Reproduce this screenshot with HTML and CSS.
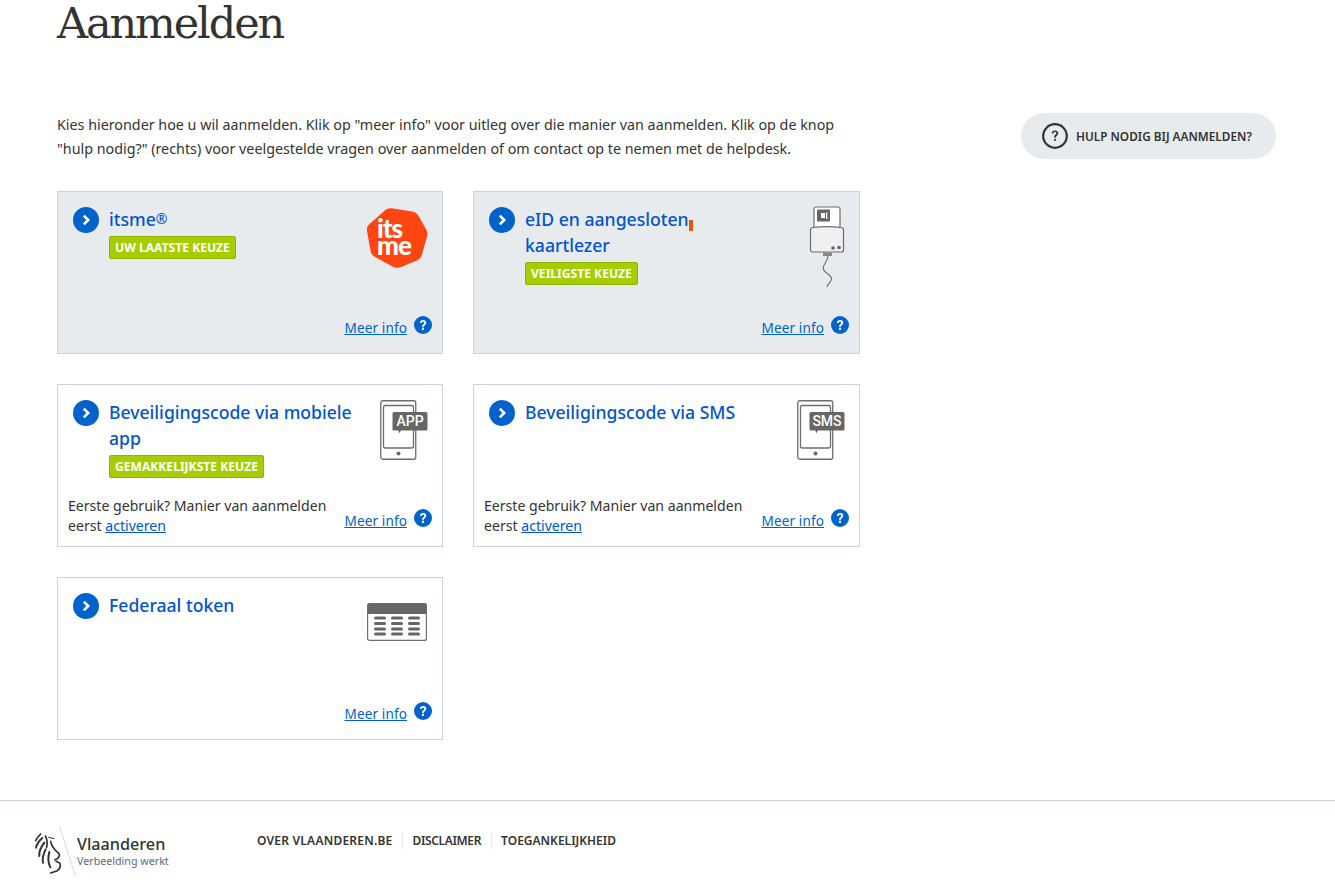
FILE: index.html
```html
<!DOCTYPE html>
<html lang="nl">
<head>
<meta charset="utf-8">
<title>Aanmelden</title>
<link rel="stylesheet" href="styles.css">
</head>
<body>
<svg class="defs" width="0" height="0" aria-hidden="true">
  <symbol id="go" viewBox="0 0 26 26"><circle cx="13" cy="13" r="13" fill="#0063cb"/><path d="M10.8 8.6 15.2 13l-4.400 4.400" fill="none" stroke="#fff" stroke-width="2.600"/></symbol>
  <symbol id="qm" viewBox="0 0 18 18"><circle cx="9" cy="9" r="9" fill="#0063cb"/><path d="M5.900 6.900C5.900 5.100 7.200 4 9.100 4c1.900 0 3.200 1.100 3.200 2.700 0 2.200-2.400 2.200-2.400 4H8c0-2.700 2.300-2.700 2.300-4 0-.6-.5-1-1.200-1-.8 0-1.300.5-1.300 1.200z" fill="#fff"/><rect x="8" y="11.700" width="2" height="2.200" fill="#fff"/></symbol>
</svg>
<main class="page">
  <h1 class="title">Aanmelden</h1>
  <div class="intro">
    <p class="intro-text">Kies hieronder hoe u wil aanmelden. Klik op "meer info" voor uitleg over die manier van aanmelden. Klik op de knop "hulp nodig?" (rechts) voor veelgestelde vragen over aanmelden of om contact op te nemen met de helpdesk.</p>
    <a class="help" href="#">
      <svg class="help-icon" viewBox="0 0 26 26" width="26" height="26"><circle cx="13" cy="13" r="11.800" fill="none" stroke="#333332" stroke-width="2.200"/><path d="M9.700 10.400c0-1.900 1.400-3 3.300-3 1.900 0 3.300 1.100 3.300 2.800 0 2.200-2.400 2.200-2.400 4.200h-1.800c0-2.800 2.300-2.700 2.300-4.100 0-.7-.6-1.200-1.400-1.200-1 0-1.500.6-1.500 1.400z" fill="#333332"/><rect x="12.100" y="15.800" width="1.800" height="2" fill="#333332"/></svg>
      <span>HULP NODIG BIJ AANMELDEN?</span>
    </a>
  </div>
  <div class="cards">
    <article class="card card-grey">
      <div class="card-head">
        <svg class="go" width="26" height="26"><use href="#go"/></svg>
        <div class="card-main">
          <a class="card-title" href="#">itsme<span class="reg">®</span></a>
          <span class="tag">Uw laatste keuze</span>
        </div>
        <svg class="logo logo-itsme" width="62" height="62" viewBox="0 0 62 62">
          <path d="M20 2.500C22 1.400 24 1 26 1.300L46 4.600C49 5.100 51.300 6.700 52.800 9.200L60.200 22.500C61.500 24.800 61.800 27 61 29.400L56 47.500C55.200 50.400 53.500 52.300 50.800 53.400L35 60C32.200 61.200 29.600 61 27 59.800L9 50C6.500 48.600 5 46.500 4.500 43.800L1 24C.6 21.400 1.300 19.200 3.200 17.300Z" fill="#ff4612"/>
          <text x="11" y="31" class="logo-text">its</text>
          <text x="11" y="48" class="logo-text">me</text>
        </svg>
      </div>
      <div class="card-foot">
        <span class="note"></span>
        <a class="more" href="#">Meer info</a>
        <svg class="qm" width="18" height="18"><use href="#qm"/></svg>
      </div>
    </article>

    <article class="card card-grey">
      <div class="card-head">
        <svg class="go" width="26" height="26"><use href="#go"/></svg>
        <div class="card-main">
          <a class="card-title" href="#">eID en aangesloten<span class="caret"></span> kaartlezer</a>
          <span class="tag">Veiligste keuze</span>
        </div>
        <svg class="logo logo-reader" width="37" height="82" viewBox="0 0 37 82">
          <rect x="6" y="1" width="26" height="21" rx="2" fill="#fff" stroke="#6d6d6d" stroke-width="1.200"/>
          <rect x="9" y="3.500" width="13" height="12" rx="1" fill="#666"/>
          <rect x="13" y="7" width="4" height="5" fill="#fff"/>
          <rect x="18" y="6.500" width="1.300" height="6.500" fill="#fff"/>
          <path d="M5 21.500c9-1 19-1 28 0a2.500 2.500 0 0 1 2.500 2.500v20a2 2 0 0 1-2 2h-29a2 2 0 0 1-2-2V24A2.500 2.500 0 0 1 5 21.500z" fill="#eef0f2" stroke="#6d6d6d" stroke-width="1.200"/>
          <circle cx="25" cy="42" r="1.800" fill="#666"/><circle cx="31" cy="41.500" r="1.800" fill="#666"/>
          <rect x="15" y="46.500" width="9" height="3.500" fill="#888"/>
          <path d="M20 50c0 5-4.800 8-4.800 12 0 5 8.300 6 8.300 11 0 3-3.500 4-4.500 8" fill="none" stroke="#6d6d6d" stroke-width="1.100"/>
        </svg>
      </div>
      <div class="card-foot">
        <span class="note"></span>
        <a class="more" href="#">Meer info</a>
        <svg class="qm" width="18" height="18"><use href="#qm"/></svg>
      </div>
    </article>

    <article class="card">
      <div class="card-head">
        <svg class="go" width="26" height="26"><use href="#go"/></svg>
        <div class="card-main">
          <a class="card-title" href="#">Beveiligingscode via mobiele app</a>
          <span class="tag">Gemakkelijkste keuze</span>
        </div>
        <svg class="logo logo-phone" width="48" height="62" viewBox="0 0 48 62">
          <rect x=".75" y=".75" width="35" height="58.500" rx="2" fill="none" stroke="#6d6d6d" stroke-width="1.300"/>
          <rect x="3.500" y="5.500" width="30" height="42.500" rx="2" fill="none" stroke="#6d6d6d" stroke-width="1.300"/>
          <circle cx="18.500" cy="53.500" r="2" fill="#666"/>
          <path d="M14 12h32a1.500 1.500 0 0 1 1.500 1.500v15.500a1.500 1.500 0 0 1-1.500 1.500H21l-2 3-.5-3H14a1.500 1.500 0 0 1-1.500-1.500v-15.500A1.500 1.500 0 0 1 14 12z" fill="#666"/>
          <text x="30" y="26" class="bubble-text" text-anchor="middle">APP</text>
        </svg>
      </div>
      <div class="card-foot">
        <span class="note">Eerste gebruik? Manier van aanmelden eerst <a href="#" class="note-link">activeren</a></span>
        <a class="more" href="#">Meer info</a>
        <svg class="qm" width="18" height="18"><use href="#qm"/></svg>
      </div>
    </article>

    <article class="card">
      <div class="card-head">
        <svg class="go" width="26" height="26"><use href="#go"/></svg>
        <div class="card-main">
          <a class="card-title" href="#">Beveiligingscode via SMS</a>
        </div>
        <svg class="logo logo-phone" width="48" height="62" viewBox="0 0 48 62">
          <rect x=".75" y=".75" width="35" height="58.500" rx="2" fill="none" stroke="#6d6d6d" stroke-width="1.300"/>
          <rect x="3.500" y="5.500" width="30" height="42.500" rx="2" fill="none" stroke="#6d6d6d" stroke-width="1.300"/>
          <circle cx="18.500" cy="53.500" r="2" fill="#666"/>
          <path d="M14 12h32a1.500 1.500 0 0 1 1.500 1.500v15.500a1.500 1.500 0 0 1-1.500 1.500H21l-2 3-.5-3H14a1.500 1.500 0 0 1-1.500-1.500v-15.500A1.500 1.500 0 0 1 14 12z" fill="#666"/>
          <text x="30" y="26" class="bubble-text" text-anchor="middle">SMS</text>
        </svg>
      </div>
      <div class="card-foot">
        <span class="note">Eerste gebruik? Manier van aanmelden eerst <a href="#" class="note-link">activeren</a></span>
        <a class="more" href="#">Meer info</a>
        <svg class="qm" width="18" height="18"><use href="#qm"/></svg>
      </div>
    </article>

    <article class="card">
      <div class="card-head">
        <svg class="go" width="26" height="26"><use href="#go"/></svg>
        <div class="card-main">
          <a class="card-title" href="#">Federaal token</a>
        </div>
        <svg class="logo logo-token" width="60" height="38" viewBox="0 0 60 38">
          <path d="M2 .5h56A1.500 1.500 0 0 1 59.500 2v9H.5V2A1.500 1.500 0 0 1 2 .5z" fill="#666"/>
          <rect x=".6" y=".6" width="58.800" height="36.800" rx="2" fill="none" stroke="#6d6d6d" stroke-width="1.200"/>
          <g fill="#666">
            <rect x="7" y="13.500" width="12" height="3" rx="1.500"/><rect x="24" y="13.500" width="12" height="3" rx="1.500"/><rect x="41" y="13.500" width="12" height="3" rx="1.500"/>
            <rect x="7" y="19" width="12" height="3" rx="1.500"/><rect x="24" y="19" width="12" height="3" rx="1.500"/><rect x="41" y="19" width="12" height="3" rx="1.500"/>
            <rect x="7" y="24.500" width="12" height="3" rx="1.500"/><rect x="24" y="24.500" width="12" height="3" rx="1.500"/><rect x="41" y="24.500" width="12" height="3" rx="1.500"/>
            <rect x="7" y="29.500" width="12" height="3" rx="1.500"/><rect x="24" y="29.500" width="12" height="3" rx="1.500"/><rect x="41" y="29.500" width="12" height="3" rx="1.500"/>
          </g>
        </svg>
      </div>
      <div class="card-foot">
        <span class="note"></span>
        <a class="more" href="#">Meer info</a>
        <svg class="qm" width="18" height="18"><use href="#qm"/></svg>
      </div>
    </article>
  </div>
</main>
<footer class="footer">
  <a class="brand" href="#">
    <svg class="lion" width="50" height="54" viewBox="0 0 150 162">
      <g fill="none" stroke="#333332" stroke-linecap="round">
        <path d="M26 30C20 36 14 42 11 50" stroke-width="5"/>
        <path d="M31 42C22 50 14 60 12 71" stroke-width="6"/>
        <path d="M37 56C28 68 20 82 22 96" stroke-width="6"/>
        <path d="M41 76C34 90 30 102 33 116" stroke-width="6"/>
        <path d="M40 36C46 46 46 60 44 70" stroke-width="5"/>
        <path d="M52 84C48 98 48 116 55 130" stroke-width="6"/>
        <path d="M56 52C58 66 66 76 80 88C84 92 84 96 76 104L68 107" stroke-width="5"/>
        <path d="M72 112L84 118C86 126 84 134 76 140L56 147" stroke-width="5"/>
        <path d="M50 40L66 44" stroke-width="3"/>
      </g>
      <path d="M82 5 130 156" fill="none" stroke="#cbd2da" stroke-width="2.500"/>
    </svg>
    <span class="brand-text">
      <span class="brand-name">Vlaanderen</span>
      <span class="brand-sub">Verbeelding werkt</span>
    </span>
  </a>
  <nav class="foot-nav">
    <a href="#">OVER VLAANDEREN.BE</a>
    <a href="#">DISCLAIMER</a>
    <a href="#">TOEGANKELIJKHEID</a>
  </nav>
</footer>
</body>
</html>
```
FILE: styles.css
```css
* { box-sizing: border-box; }
html, body { margin: 0; padding: 0; }
body {
  font-family: "Noto Sans", "Open Sans", sans-serif;
  color: #333332;
  background: #fff;
  font-size: 15px;
  height: 882px;
  overflow: hidden;
}
.defs { position: absolute; }
a { color: inherit; }

.page { padding: 0 59px 0 57px; height: 800px; }

.title {
  margin: 0;
  height: 113px;
  font-family: "DejaVu Serif", serif;
  font-weight: 400;
  font-size: 43px;
  line-height: 46px;
  letter-spacing: -2.100px;
  color: #333332;
}

.intro { display: flex; justify-content: space-between; align-items: flex-start; height: 78px; }
.intro-text { margin: 0; width: 800px; font-size: 14.300px; line-height: 24px; }

.help {
  display: flex;
  align-items: center;
  gap: 8px;
  width: 255px;
  height: 46px;
  padding-left: 21px;
  background: #e8ebee;
  border-radius: 23px;
  text-decoration: none;
  font-size: 11.800px;
  font-weight: 600;
  color: #333332;
}
.help-icon { flex: none; }

.cards {
  display: grid;
  grid-template-columns: 386px 387px;
  grid-auto-rows: 163px;
  column-gap: 30px;
  row-gap: 30px;
}

.card {
  display: flex;
  flex-direction: column;
  border: 1px solid #cbd2da;
  background: #fff;
  padding: 15px 10px 9px 15px;
}
.card-grey { background: #e8ebee; }

.card-head { display: flex; align-items: flex-start; flex: 1; min-height: 0; }
.go { flex: none; margin-right: 10px; }
.card-main { flex: 1; min-width: 0; max-width: 250px; margin-right: auto; margin-top: -1px; display: flex; flex-direction: column; align-items: flex-start; }
.card-title {
  font-size: 17.600px;
  line-height: 26px;
  font-weight: 500;
  color: #0055cc;
  text-decoration: none;
  position: relative;
}
.reg { font-weight: 400; font-size: 14px; vertical-align: 2px; }
.caret {
  position: absolute;
  width: 4px;
  height: 11px;
  margin-top: 14px;
  background: #e8590c;
}
.tag {
  margin-top: 4px;
  height: 23px;
  padding: 0 5px;
  display: inline-flex;
  align-items: center;
  background: #a5cd00;
  border: 1px solid #8fb300;
  border-radius: 2px;
  color: #fff;
  font-size: 12.100px;
  font-weight: 700;
  text-transform: uppercase;
  white-space: nowrap;
}

.logo { flex: none; }
.logo-itsme { margin: 0 4px 0 0; }
.logo-reader { margin: -1px 4px 0 0; }
.logo-phone { margin: 0 4px 0 0; }
.logo-token { margin: 10px 5px 0 0; }
.logo-text { font-family: "Lato", sans-serif; font-weight: 900; font-size: 26px; fill: #fff; letter-spacing: -1px; }
.bubble-text { font-family: "Roboto", sans-serif; font-weight: 500; font-size: 14px; fill: #fff; }

.card-foot { display: flex; align-items: flex-end; margin-left: -5px; }
.note { flex: 1; font-size: 14.100px; line-height: 20px; max-width: 277px; margin: 0 auto 1px 0; color: #333332; }
.note-link { color: #0055cc; }
.more { font-size: 13.600px; line-height: 20px; color: #0063cb; margin-bottom: 6px; margin-right: 7px; letter-spacing: .1px; }
.qm { flex: none; margin-bottom: 10px; }

.footer {
  height: 82px;
  border-top: 1px solid #cbd2da;
  display: flex;
  align-items: flex-start;
  padding: 23px 0 0 32px;
}
.brand { display: flex; align-items: flex-start; text-decoration: none; width: 225px; }
.lion { flex: none; margin-right: -5px; }
.brand-text { display: flex; flex-direction: column; padding-top: 11px; }
.brand-name { font-size: 16.200px; line-height: 19px; font-weight: 500; color: #333332; }
.brand-sub { font-size: 10.700px; line-height: 14px; color: #5a6b7b; }

.foot-nav { display: flex; padding-top: 8px; }
.foot-nav a {
  font-size: 12px;
  line-height: 18px;
  font-weight: 600;
  text-decoration: none;
  color: #333332;
  padding-right: 10px;
  margin-right: 9px;
  border-right: 1px solid #e8ebee;
}
.foot-nav a:nth-child(1) { letter-spacing: .22px; }
.foot-nav a:nth-child(2) { letter-spacing: -.35px; }
.foot-nav a:last-child { border-right: 0; }
```
